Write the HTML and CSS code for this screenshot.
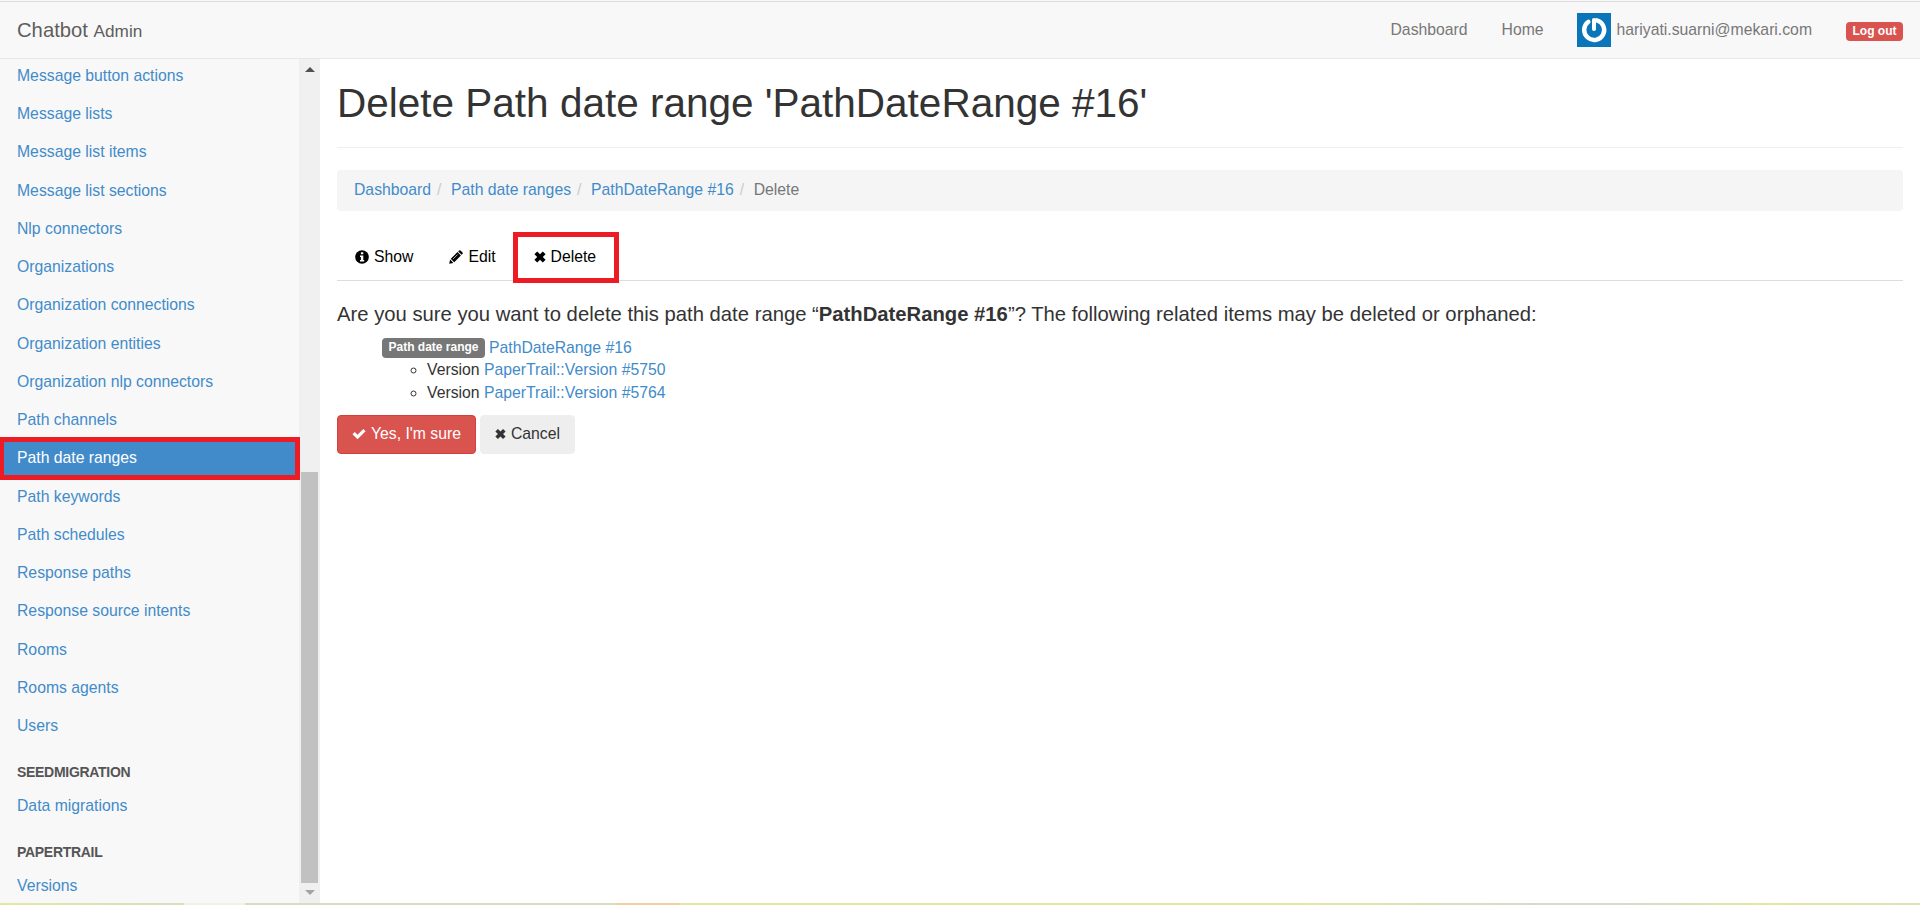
FILE: index.html
```
<!DOCTYPE html>
<html lang="en">
<head>
<meta charset="utf-8">
<title>Delete Path date range</title>
<link rel="stylesheet" href="styles.css">
</head>
<body>
<svg class="defs" aria-hidden="true">
  <symbol id="info" viewBox="0 0 14 14"><circle cx="7" cy="7" r="6.8"/><path fill="#fff" d="M5.9 2.2h2.4v2H5.9zM5 5.4h3.3v4.7h.9v1.5H5v-1.5h.9V6.9H5z"/></symbol>
  <symbol id="pencil" viewBox="0 0 14 14"><path d="M.2 13.8l.9-4.2 3.3 3.3zM1.8 8.8l6.7-6.7 3.4 3.4-6.7 6.7zM9.2 1.4l.9-.9q.7-.6 1.4 0l2 2q.6.7 0 1.4l-.9.9z"/><path fill="none" stroke="#fff" stroke-width=".7" d="M4 9.1l4.6-4.6"/></symbol>
  <symbol id="cross" viewBox="0 0 12 12"><path d="M3.2.5L6 3.3 8.8.5l2.8 2.8L8.8 6l2.8 2.8-2.8 2.7L6 8.7l-2.8 2.8L.4 8.8 3.2 6 .4 3.3z"/></symbol>
  <symbol id="check" viewBox="0 0 15 12"><path d="M.5 6.3l2.4-2.4 3 2.9L12.1.6 14.5 3l-8.6 8.6z"/></symbol>
</svg>
<header class="navbar">
  <a class="brand">Chatbot <small>Admin</small></a>
  <nav class="topnav">
    <a class="dash">Dashboard</a>
    <a class="home">Home</a>
    <a class="user">
      <svg class="avatar" viewBox="0 0 34 34"><rect width="34" height="34" fill="#0a76b9"/><path fill="none" stroke="#fff" stroke-width="4.4" stroke-linecap="round" d="M11.4 8.8a10 10 0 1 0 8.4-1.5"/><path stroke="#fff" stroke-width="4" stroke-linecap="round" d="M17 7v9"/></svg>
      <span>hariyati.suarni@mekari.com</span>
    </a>
    <a class="logout">Log out</a>
  </nav>
</header>
<div class="body">
  <aside class="sidebar">
    <ul class="menu">
      <li>Message button actions</li>
      <li>Message lists</li>
      <li>Message list items</li>
      <li>Message list sections</li>
      <li>Nlp connectors</li>
      <li>Organizations</li>
      <li>Organization connections</li>
      <li>Organization entities</li>
      <li>Organization nlp connectors</li>
      <li>Path channels</li>
      <li class="active">Path date ranges</li>
      <li>Path keywords</li>
      <li>Path schedules</li>
      <li>Response paths</li>
      <li>Response source intents</li>
      <li>Rooms</li>
      <li>Rooms agents</li>
      <li>Users</li>
      <li class="heading">SEEDMIGRATION</li>
      <li>Data migrations</li>
      <li class="heading">PAPERTRAIL</li>
      <li>Versions</li>
    </ul>
  </aside>
  <div class="scrollbar">
    <i class="up"></i>
    <i class="thumb"></i>
    <i class="down"></i>
  </div>
  <main class="content">
    <h1>Delete Path date range 'PathDateRange #16'</h1>
    <ol class="breadcrumb">
      <li><a>Dashboard</a></li>
      <li><a>Path date ranges</a></li>
      <li><a>PathDateRange #16</a></li>
      <li>Delete</li>
    </ol>
    <ul class="tabs">
      <li><svg class="i14"><use href="#info"/></svg>Show</li>
      <li><svg class="i14"><use href="#pencil"/></svg>Edit</li>
      <li class="marked"><svg class="i12"><use href="#cross"/></svg>Delete</li>
    </ul>
    <h4>Are you sure you want to delete this path date range “<strong>PathDateRange #16</strong>”? The following related items may be deleted or orphaned:</h4>
    <div class="related">
      <div class="item"><span class="label">Path date range</span> <a>PathDateRange #16</a></div>
      <ul class="versions">
        <li>Version <a>PaperTrail::Version #5750</a></li>
        <li>Version <a>PaperTrail::Version #5764</a></li>
      </ul>
    </div>
    <div class="actions">
      <button class="btn danger"><svg class="i15"><use href="#check"/></svg>Yes, I'm sure</button>
      <button class="btn plain"><svg class="i12"><use href="#cross"/></svg>Cancel</button>
    </div>
  </main>
</div>
<footer class="strip"></footer>
</body>
</html>
```
FILE: styles.css
```
*, *::before, *::after { box-sizing: border-box; }
body { margin: 0; width: 1920px; height: 905px; overflow: hidden; display: flex; flex-direction: column; background: #fff; color: #333; font: 15.75px/22.5px "Liberation Sans", Arial, sans-serif; }
ul, ol { list-style: none; margin: 0; padding: 0; }
a { color: #428bca; }
.defs { display: none; }
.navbar { flex: none; height: 59px; display: flex; justify-content: space-between; background: linear-gradient(#f8f8f8 1px, #dcdcdc 1px, #dcdcdc 2px, #f8f8f8 2px); border-bottom: 1px solid #e7e7e7; padding: 0 17px; }
.brand { color: #5e5e5e; font-size: 20.25px; line-height: 61px; }
.brand small { font-size: 17.2px; }
.topnav { display: flex; align-items: center; }
.topnav a { color: #777; line-height: 24px; padding-top: 1px; }
.home { margin-left: 34px; }
.topnav .user { display: flex; align-items: center; margin-left: 33px; gap: 6px; padding-top: 0; }
.user span { padding-top: 1px; }
.avatar { width: 34px; height: 34px; margin-top: 1px; }
.topnav .logout { margin-left: 34px; margin-top: 4px; padding: 0; width: 57px; height: 19px; border-radius: 4px; background: #d9534f; color: #fff; font-size: 12px; font-weight: bold; line-height: 18px; text-align: center; }
.body { flex: 1; min-height: 0; display: flex; }
.sidebar { width: 299px; background: #f8f8f8; }
.menu { margin-top: -2.2px; }
.menu li { height: 38.25px; line-height: 38.25px; padding-left: 17px; color: #428bca; }
.menu li.active { position: relative; background: #428bca; color: #fff; }
.menu li.active::after { content: ""; position: absolute; left: -1px; top: -2px; width: 301px; height: 43px; border: 5px solid #ed1c24; }
.menu li.heading { height: 41.6px; line-height: 54px; color: #555; font-size: 14px; letter-spacing: -.3px; font-weight: bold; }
.scrollbar { width: 21px; background: #f0f0f0; display: flex; flex-direction: column; align-items: center; }
.up { width: 0; height: 0; margin-top: 8px; border: 5px solid transparent; border-top: 0; border-bottom-color: #505050; }
.thumb { width: 17px; height: 411px; margin-top: 400px; background: #c1c1c1; }
.down { width: 0; height: 0; margin-top: 7px; border: 5px solid transparent; border-bottom: 0; border-top-color: #a3a3a3; }
.content { flex: 1; padding: 0 17px; }
h1 { margin: 22px 0 0; height: 67px; font-size: 40.5px; line-height: 44px; font-weight: 400; border-bottom: 1px solid #eee; }
.breadcrumb { display: flex; height: 41px; margin-top: 22px; padding: 0 17px; line-height: 39px; background: #f5f5f5; border-radius: 4px; color: #777; }
.breadcrumb li + li::before { content: "/"; color: #ccc; padding: 0 9.6px 0 6px; }
.tabs { display: flex; height: 48px; margin-top: 22px; border-bottom: 1px solid #ddd; color: #000; line-height: 47px; }
.tabs li { display: flex; align-items: center; padding: 0 18px; }
.tabs svg { margin-right: 5px; }
.tabs .marked { position: relative; padding-left: 20px; }
.marked::after { content: ""; position: absolute; left: -1px; top: -1px; width: 106px; height: 51px; border: 5px solid #ed1c24; }
svg { fill: currentColor; }
.i14 { width: 14px; height: 14px; }
.i12 { width: 12px; height: 12px; }
.i15 { width: 15px; height: 12px; }
h4 { margin: 22px 0 0; font-size: 20.25px; line-height: 22px; font-weight: 400; }
.related { margin: 11px 0 0 45px; }
.item { display: flex; gap: 4px; height: 22.5px; line-height: 24px; }
.label { width: 103px; height: 20px; margin-top: 2px; background: #777; color: #fff; border-radius: 4px; font-size: 12px; font-weight: bold; line-height: 18px; text-align: center; }
.versions { padding-left: 45px; list-style: circle; }
.versions li + li { padding-top: 1px; }
.actions { display: flex; gap: 4px; margin-top: 10.5px; }
.btn { height: 39px; border: 1px solid #eee; border-radius: 4px; background: #eee; color: #333; font: inherit; display: flex; align-items: center; padding: 0 14px 1px; white-space: nowrap; }
.btn svg { margin-right: 5px; }
.danger { width: 139px; background: #d9534f; border-color: #d43f3a; color: #fff; }
.plain { width: 95px; }
.strip { flex: none; height: 2px; background: linear-gradient(90deg, #e3e8a0 0, #d9ddc0 184px, #f0f2e4 184px, #f0f2e4 245px, #d9ddc0 245px, #d9ddc0 617px, #f3cfa0 617px, #f3cfa0 680px, #e3e8a0 680px, #e3e8a0 1300px, #d6d9cc 1540px, #d6d9cc 1620px, #e3e8a0 1760px, #dde2b4 1914px); }
```
